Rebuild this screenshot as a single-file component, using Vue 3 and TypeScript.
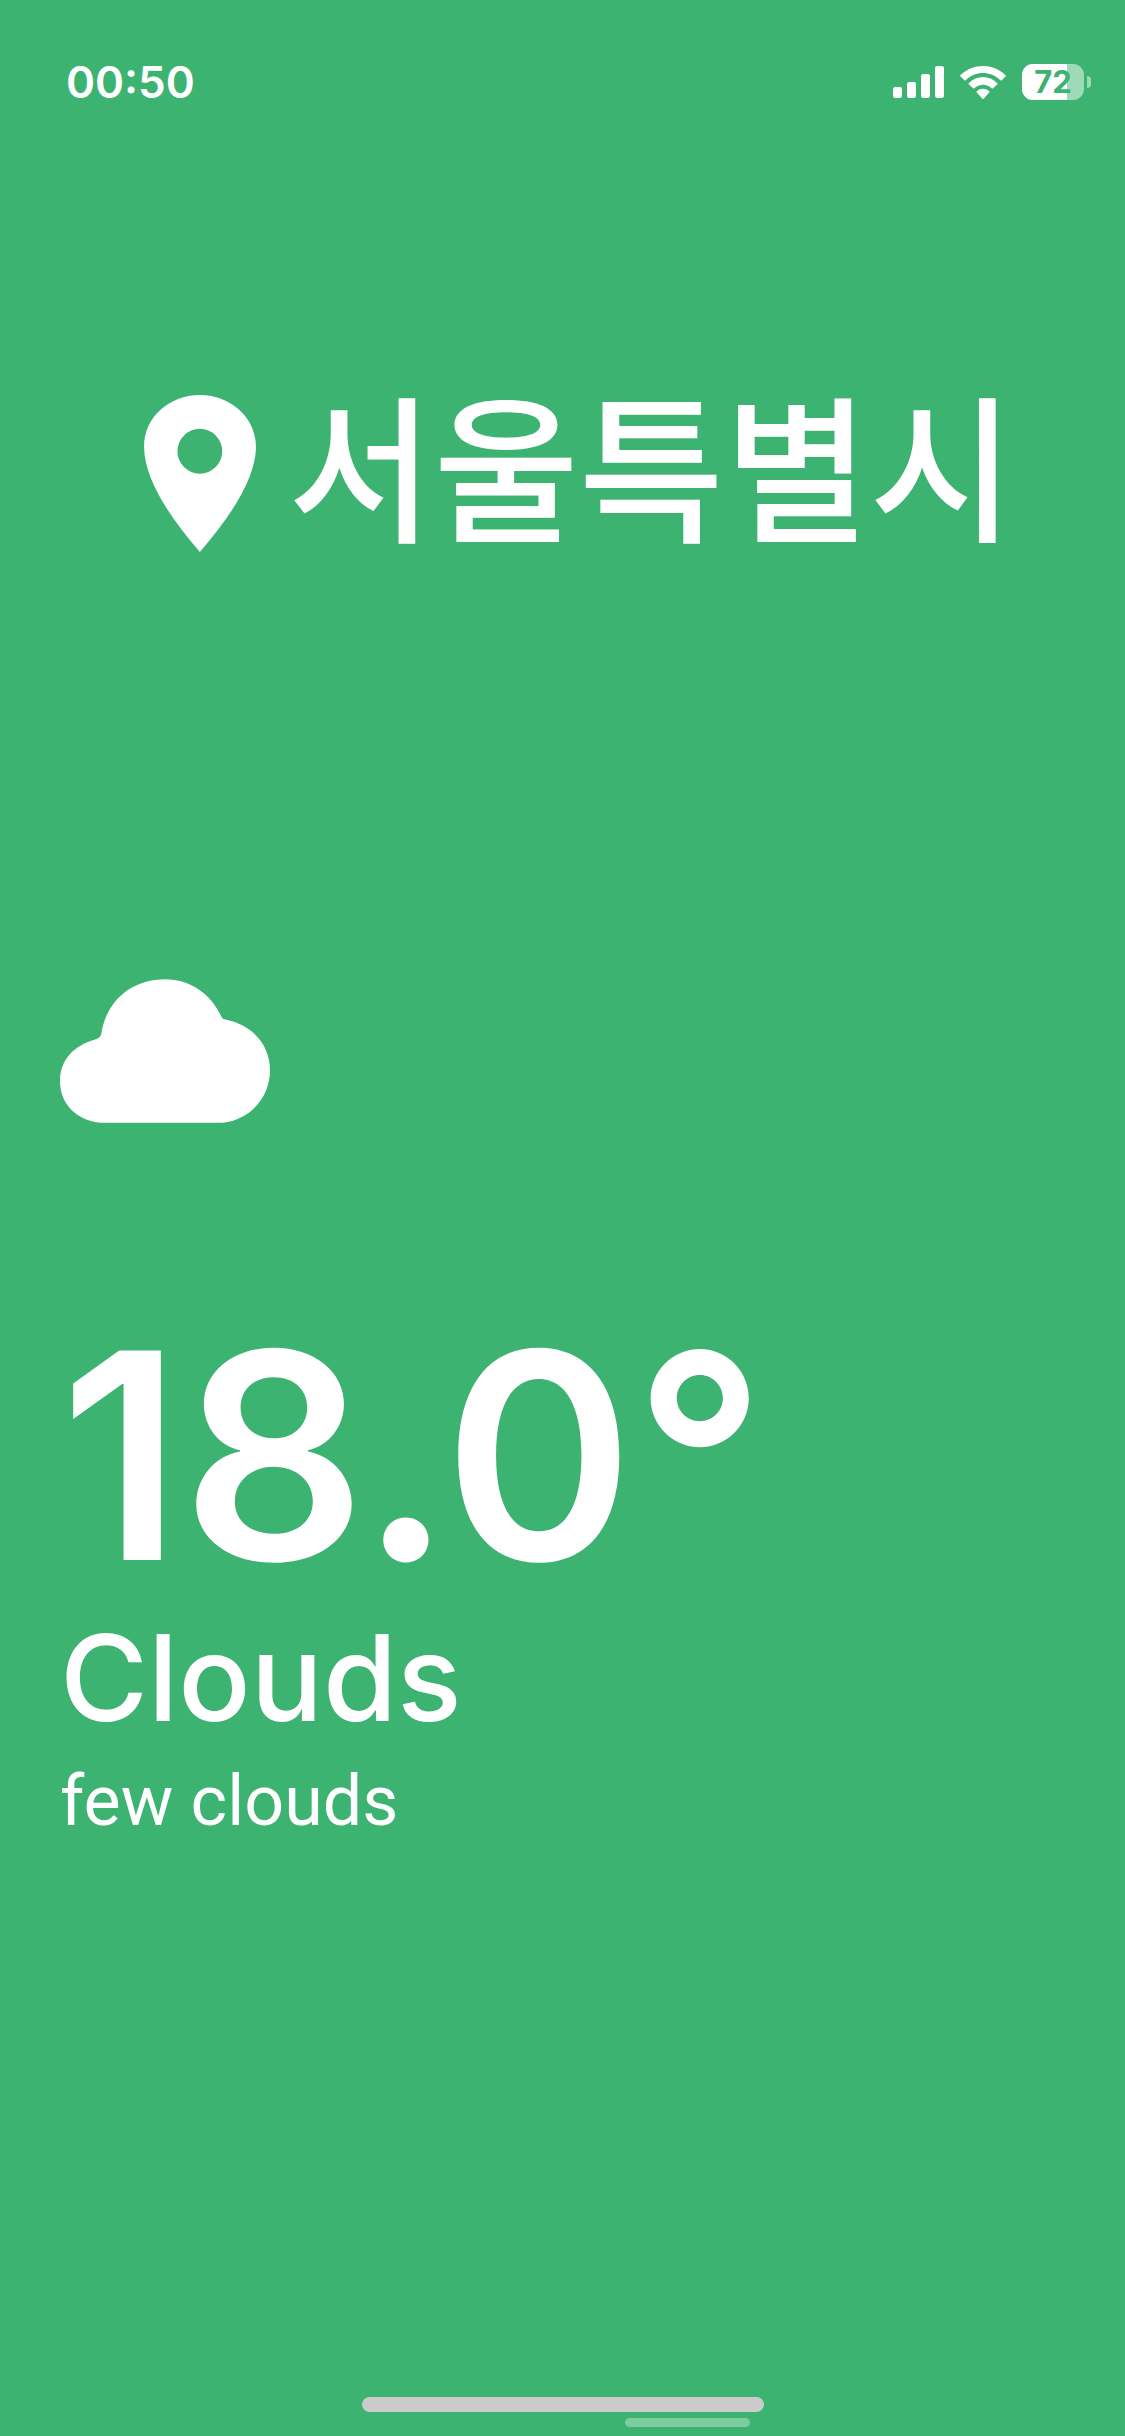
<script setup lang="ts">
interface Weather {
  city: string
  temperature: number
  summary: string
  description: string
}

const time = '00:50'
const battery = 72
const signalBars = [33, 48, 72, 96]

const weather: Weather = {
  city: '서울특별시',
  temperature: 18,
  summary: 'Clouds',
  description: 'few clouds',
}
</script>

<template>
  <div class="screen">
    <header class="status">
      <time class="clock">{{ time }}</time>
      <div class="indicators">
        <svg class="signal" viewBox="0 0 153 96" aria-label="Signal">
          <rect
            v-for="(bar, i) in signalBars"
            :key="bar"
            :x="i * 42"
            :y="96 - bar"
            width="27"
            :height="bar"
            rx="7"
          />
        </svg>
        <svg class="wifi" viewBox="270 75 138 99" aria-label="Wi-Fi">
          <path d="M271 103C310 66 368 66 407 103Q408 105 407 106L395 118Q393 119 391 118C361 89 317 89 287 118Q285 119 283 118L271 106Q270 105 271 103Z" />
          <path d="M296 127C321 102 357 102 382 127Q383 129 382 130L369 142Q367 143 365 142C350 128 328 128 313 142Q311 143 309 142L296 130Q295 129 296 127Z" />
          <path d="M320 151C332 141 346 141 358 151Q359 153 358 154L341 173Q339 175 337 173L320 154Q319 153 320 151Z" />
        </svg>
        <div class="battery">
          <div class="cell">
            <div class="charge" :style="{ width: battery + '%' }"></div>
            <span class="level">{{ battery }}</span>
          </div>
          <div class="nub"></div>
        </div>
      </div>
    </header>

    <main class="content">
      <h1 class="city">
        <svg class="pin" viewBox="75 72 337 473" aria-hidden="true">
          <path
            fill-rule="evenodd"
            d="M243 72C150 72 75 140 75 228C75 322 150 438 243 545C336 438 412 322 412 228C412 140 336 72 243 72ZM243 174A67.500 67.500 0 1 1 243 309A67.500 67.500 0 1 1 243 174Z"
          />
        </svg>
        <span>{{ weather.city }}</span>
      </h1>

      <section class="day">
        <svg class="cloud" viewBox="60 87 630 431" aria-hidden="true">
          <path d="M182 518C108 510 60 460 60 393C60 330 100 285 168 267C177 264 182 260 184 250C200 150 276 87 375 87C450 87 512 130 543 197C546 204 549 207 557 208C640 226 690 285 690 360C690 440 632 508 548 518Z" />
        </svg>
        <p class="temperature">{{ weather.temperature.toFixed(1) }}°</p>
        <h2 class="summary">{{ weather.summary }}</h2>
        <p class="description">{{ weather.description }}</p>
      </section>
    </main>

    <footer class="bottom">
      <div class="home"></div>
      <div class="scroll"></div>
    </footer>
  </div>
</template>

<style>
body {
  margin: 0;
  background: #3db371;
}
</style>

<style scoped>
.screen {
  display: flex;
  flex-direction: column;
  min-height: 100vh;
  background: #3db371;
  color: #fff;
  font-family: Inter, "Noto Sans CJK KR", sans-serif;
}

svg {
  display: block;
  flex: none;
  fill: currentColor;
}

h1,
h2,
p {
  margin: 0;
}

.status {
  display: flex;
  align-items: center;
  justify-content: space-between;
  height: 164px;
  padding: 0 34px 0 66px;
}

.clock {
  font-size: 44px;
  line-height: 56px;
  font-weight: 600;
}

.indicators {
  display: flex;
  align-items: center;
  gap: 16px;
}

.signal {
  width: 51px;
  height: 32px;
}

.wifi {
  width: 46px;
  height: 33px;
}

.battery {
  display: flex;
  align-items: center;
  gap: 3px;
}

.cell {
  position: relative;
  width: 62px;
  height: 36px;
  border-radius: 11px;
  background: rgba(255, 255, 255, 0.5);
}

.charge {
  height: 100%;
  border-radius: 11px 0 0 11px;
  background: #fff;
}

.level {
  position: absolute;
  inset: 0;
  color: #3db371;
  font-size: 31px;
  line-height: 36px;
  font-weight: 700;
  text-align: center;
}

.nub {
  width: 4px;
  height: 12px;
  border-radius: 0 6px 6px 0;
  background: rgba(255, 255, 255, 0.5);
}

.content {
  flex: 1;
}

.city {
  display: flex;
  align-items: center;
  justify-content: center;
  gap: 32px;
  padding: 192px 0 192px 34px;
  font-size: 158px;
  line-height: 234px;
  font-weight: 500;
}

.pin {
  width: 112px;
  height: 157px;
}

.day {
  padding: 197px 60px 0;
}

.cloud {
  width: 210px;
  height: 144px;
}

.temperature {
  margin-top: 182px;
  font-size: 288px;
  line-height: 300px;
  font-weight: 600;
}

.summary {
  font-size: 120px;
  line-height: 146px;
  font-weight: 500;
}

.description {
  margin-top: 6px;
  font-family: Roboto, sans-serif;
  font-size: 70px;
  line-height: 88px;
}

.bottom {
  display: flex;
  flex-direction: column;
  align-items: center;
  gap: 6px;
  padding-bottom: 9px;
}

.home {
  width: 402px;
  height: 15px;
  border-radius: 8px;
  background: #cbcbcb;
}

.scroll {
  width: 125px;
  height: 9px;
  margin-left: 250px;
  border-radius: 5px;
  background: #7bcc9e;
}
</style>
